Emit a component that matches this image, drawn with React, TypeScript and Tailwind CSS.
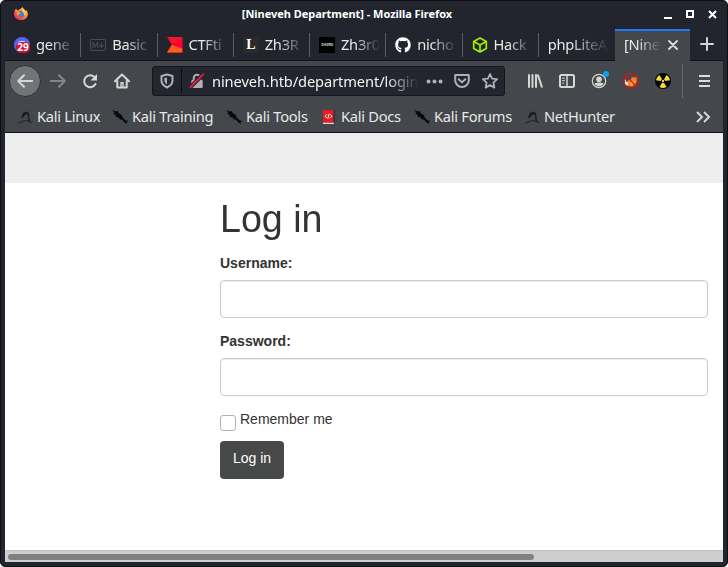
import React from "react";
import { FaGithub } from "react-icons/fa";
import { BsMarkdown } from "react-icons/bs";

const fade = "overflow-hidden whitespace-nowrap pb-[2px] [mask-image:linear-gradient(to_right,black_35%,transparent)]";

function FirefoxLogo() {
  return (
    <svg width="14" height="14" viewBox="0 0 14 14">
      <defs>
        <linearGradient id="fx" x1="1" y1="0" x2="0.2" y2="1">
          <stop offset="0" stopColor="#ffe04a" />
          <stop offset="0.45" stopColor="#ff9a26" />
          <stop offset="1" stopColor="#ed1d57" />
        </linearGradient>
      </defs>
      <path d="M1 3 2 1.6 3 3 4.5 3.3 7.5 1 8.5 0C9 2 11 2.2 11.6 4L12.5 3C13.4 4.6 14 6 13.8 8A6.9 6.2 0 0 1 .2 8C0 6 .4 4.4 1 3Z" fill="url(#fx)" />
      <circle cx="7.2" cy="7" r="3.3" fill="#4579e5" />
      <path d="M2.6 4.6 6 5.2 7 6.5 5 7.2 4.6 8.5 3 8Z" fill="#ff9526" />
      <path d="M8.6 1.2C12 3 12 7 10.2 9 11 6.5 9 5.5 8 4Z" fill="#ffd23f" />
    </svg>
  );
}

function DiscordIcon() {
  return (
    <div className="relative size-4 rounded-full bg-[#5865f2]">
      <div className="absolute left-[4px] top-[4px] h-[6px] w-[8px] rounded-[3px] bg-[#dfe2ff]" />
      <div className="absolute left-[2px] top-[5px] flex h-[11px] w-[14px] items-center justify-center rounded-[5px] bg-[#d3102c] font-['Noto_Sans'] text-[10px] font-bold leading-none tracking-normal text-white">29</div>
    </div>
  );
}

function CtfIcon() {
  return (
    <svg width="16" height="16" viewBox="0 0 16 16">
      <path d="M0 0h15.3v15.5H0l5-7.7Z" fill="#f5142b" />
      <path d="M5 7.8 15.3 11.5v4H0Z" fill="#ff5a1f" />
      <path d="m5 7.8 10.3-7v10.7Z" fill="#ff0035" />
    </svg>
  );
}

function BoxIcon() {
  return (
    <svg width="16" height="16" viewBox="0 0 16 16" fill="none" stroke="#9fef00" strokeWidth="1.7" strokeLinejoin="round">
      <path d="m8 1 6.3 3.5v7L8 15l-6.3-3.5v-7ZM1.7 4.5 8 8l6.3-3.5M8 8v7" />
    </svg>
  );
}

const tabs: { label: string; icon?: React.ReactNode }[] = [
  { label: "gene", icon: <DiscordIcon /> },
  { label: "Basic", icon: <BsMarkdown size={16} color="#4b4b4d" /> },
  { label: "CTFti", icon: <CtfIcon /> },
  { label: "Zh3R", icon: <div className="flex size-4 items-center justify-center bg-[#2a2a2a] font-['Liberation_Serif'] text-[14px] font-bold leading-none text-white">L</div> },
  { label: "Zh3r0", icon: <div className="flex size-4 items-center justify-center bg-black font-['Liberation_Sans'] text-[4px] font-bold leading-none tracking-[-0.1px] text-[#ddd]">ZH3R0</div> },
  { label: "nicho", icon: <FaGithub size={16} color="#fff" /> },
  { label: "Hack", icon: <BoxIcon /> },
  { label: "phpLiteA" },
];

function KaliIcon() {
  return (
    <svg width="16" height="16" viewBox="0 0 16 16">
      <path d="M4.2 9.2C4.6 5 7 2.2 9.8 2.8c2.6.6 2.8 3.4 2.7 6.2l.3 2.2 2.4 2.6-4-1.7c.3-3.2.2-6.6-1.6-6.8-2-.1-2 3.6-5.4 3.9Z" fill="#1b1c1f" />
      <path d="M1 14.2C4 13.8 4.6 12 7.5 11.6s5 1 7.6 2.2" fill="none" stroke="#2a2c30" strokeWidth="1.2" />
    </svg>
  );
}

function DragonIcon() {
  return (
    <svg width="16" height="16" viewBox="0 0 16 16" fill="#08090a">
      <path d="m0 .8 3.6 1.6L5.5 2l2 3 2.2.8L11 9l2.2 2.1 2.8.9-.2 1-1.6-.2 1.3 2.4-3.1-1.6-2.2-2.8-2.7-.5L6.7 8.4 4 8.1 3.4 5.8.9 4.2l1.5-.4Z" />
    </svg>
  );
}

function DocsIcon() {
  return (
    <svg className="ml-px" width="14" height="16" viewBox="0 0 14 16">
      <path d="M1 1h11v13H1Z" fill="#e51c23" />
      <path d="M11.5 1H13v13h-1.5Z" fill="#24314c" />
      <path d="M1 13.8h11V15H1Z" fill="#d9dadb" />
      <path d="m5 5.2-2 2 2 2M8 5.2l2 2-2 2M7.2 4.8 5.8 9.6" fill="none" stroke="#fff" strokeWidth="1" />
    </svg>
  );
}

function Bookmark({ label, icon, className }: { label: string; icon: React.ReactNode; className: string }) {
  return (
    <div className={`flex shrink-0 items-center ${className}`}>
      <div className="mr-1 w-4 shrink-0">{icon}</div>
      <span className="whitespace-nowrap pb-[2px]">{label}</span>
    </div>
  );
}

function Stroke({ children, size = 16, color = "#d6d6d4", width = 2 }: { children: React.ReactNode; size?: number; color?: string; width?: number }) {
  return (
    <svg className="shrink-0" width={size} height={size} viewBox="0 0 16 16" fill="none" stroke={color} strokeWidth={width} strokeLinecap="round" strokeLinejoin="round">
      {children}
    </svg>
  );
}

function ProxyIcon() {
  return (
    <svg width="16" height="16" viewBox="0 0 16 16">
      <circle cx="8" cy="8" r="7.3" fill="#44474b" />
      <path d="M3 10.5 5 7.5l3-1 1-3 1.5 1.2L13.5 4l.3 4-1.5 4-3.5 1.5-4-.5Z" fill="#ef8923" />
      <path d="m1.5 5 2 4 2 1-1 3L2 11Z" fill="#eee5d5" />
      <path d="m8 8 2 1 2-1.5-1 3.5-3 1Z" fill="#ffc067" />
      <circle cx="8" cy="8" r="7.3" fill="none" stroke="#ce151b" strokeWidth="1.3" />
      <path d="m3 3 10 10" stroke="#ce151b" strokeWidth="1.3" />
    </svg>
  );
}

function RadiationIcon() {
  return (
    <svg width="16" height="16" viewBox="0 0 16 16">
      <circle cx="8" cy="8" r="8" fill="#050505" />
      <g fill="#f6d93b">
        <path d="M.9 7.2A7.1 7.1 0 0 1 4.4 1.9L7 6.2A2 2 0 0 0 6 8Z" />
        <path d="M15.1 7.2a7.1 7.1 0 0 0-3.5-5.3L9 6.2A2 2 0 0 1 10 8Z" />
        <path d="M4.5 14.1a7.1 7.1 0 0 0 7 0L9 9.8a2 2 0 0 1-2 0Z" />
        <circle cx="8" cy="8" r="1.2" />
      </g>
    </svg>
  );
}

export default function App() {
  return (
    <div className="h-[567px] w-[728px] bg-white">
      <div className="flex h-full w-full flex-col overflow-hidden rounded-[5px] border border-[#0d0f15] bg-[#23252e] px-1 pb-1 font-['Noto_Sans',sans-serif] text-[#e9e9e7]">
        {/* Title bar */}
        <header className="grid h-7 shrink-0 grid-cols-[230px_1fr_230px] items-center">
          <div className="-mt-[2px] pl-[9px]"><FirefoxLogo /></div>
          <h1 className="-mt-[3px] ml-[-34px] whitespace-nowrap text-center text-[11px] font-bold leading-4 tracking-[-0.04px] text-white">[Nineveh Department] - Mozilla Firefox</h1>
          <div className="-mt-[2px] flex items-center justify-end gap-[13px] pr-[6px]">
            <svg width="9" height="9" viewBox="0 0 9 9"><path d="M0 7h8v2H0Z" fill="#fff" /></svg>
            <svg width="9" height="9" viewBox="0 0 9 9"><path d="M1 1h6v6H1Z" fill="none" stroke="#fff" strokeWidth="2" /></svg>
            <svg width="9" height="9" viewBox="0 0 9 9"><path d="m1 1 7 7m0-7-7 7" stroke="#fff" strokeWidth="2" /></svg>
          </div>
        </header>

        {/* Tabs */}
        <div className="flex h-8 shrink-0 border-b border-[#101117] text-[14.67px] tracking-[-0.27px]">
          {tabs.map((tab, i) => (
            <div key={i} className="flex w-[76.25px] shrink-0 items-center pl-[9px]">
              {tab.icon && <div className="mr-[6px] w-4 shrink-0">{tab.icon}</div>}
              <div className={`min-w-0 flex-1 ${fade}`}>{tab.label}</div>
              <div className={`ml-[5px] h-6 w-px ${i === 7 ? "bg-transparent" : "bg-[#5b5d63]"}`} />
            </div>
          ))}
          <div className="-mb-px flex h-8 w-[75px] shrink-0 items-center border-t-2 border-[#2277f5] bg-[#44474c] pl-[9px]">
            <div className={`-mt-[2px] w-[38px] ${fade}`}>[Ninev</div>
            <svg className="-mt-[2px] ml-[6px]" width="10" height="10" viewBox="0 0 10 10"><path d="m1 1 8 8m0-8L1 9" stroke="#deddda" strokeWidth="1.8" strokeLinecap="round" /></svg>
          </div>
          <div className="flex flex-1 items-center justify-center pb-px">
            <svg width="14" height="14" viewBox="0 0 14 14"><path d="M7 1v12M1 7h12" stroke="#d5d3d2" strokeWidth="2" strokeLinecap="round" /></svg>
          </div>
        </div>

        {/* Navigation */}
        <nav className="flex h-10 shrink-0 items-center bg-[#44474c]">
          <div className="ml-1 flex size-8 shrink-0 items-center justify-center rounded-full border border-[#303237] bg-[#737477]">
            <Stroke><path d="M15.2 8H1.2M7 2.2 1.2 8 7 13.8" /></Stroke>
          </div>
          <div className="ml-[9px] w-4"><Stroke color="#85868a"><path d="M.8 8h14M9 2.2 14.8 8 9 13.8" /></Stroke></div>
          <div className="ml-4 w-4">
            <svg width="16" height="16" viewBox="0 0 16 16"><path d="M13.5 11A6 6 0 1 1 12.5 4" fill="none" stroke="#d6d6d4" strokeWidth="2" strokeLinecap="round" /><path d="M15 1v6.5H8.5Z" fill="#d6d6d4" /></svg>
          </div>
          <div className="ml-4 w-4">
            <Stroke><path d="M1 8.3 8 1.5l7 6.8M3.3 8v6.5h9.4V8" /><path d="M7 14V9.7h2V14" strokeWidth="1.4" /></Stroke>
          </div>
          <div className="ml-[22px] flex h-[30px] w-[353px] shrink-0 items-center rounded-[3px] border border-[#15161d] bg-[#23252f]">
            <div className="ml-[7px] w-4">
              <svg width="14" height="16" viewBox="0 0 14 16"><path d="M7 1.5 12.5 3v4.5c0 3-2 5.4-5.5 7-3.5-1.6-5.5-4-5.5-7V3Z" fill="none" stroke="#aeb0b5" strokeWidth="2" strokeLinejoin="round" /><path d="M7 4.4v7.1C5.2 10.3 4.4 9 4.4 7.3V5Z" fill="#aeb0b5" /></svg>
            </div>
            <div className="ml-[5px] h-6 w-px bg-[#0d0e13]" />
            <div className="ml-[7px] w-4">
              <svg width="16" height="16" viewBox="0 0 16 16"><path d="M4.7 8V5a3.3 3.3 0 0 1 6.6 0v3" fill="none" stroke="#aeb0b5" strokeWidth="2" /><rect x="2.3" y="7" width="11.4" height="8" rx="1" fill="#aeb0b5" /><path d="m1 14.5 13-13" stroke="#23252f" strokeWidth="4" /><path d="m1.5 14 12.7-12.6" stroke="#e81b48" strokeWidth="2" strokeLinecap="round" /></svg>
            </div>
            <div className="ml-[7px] w-[207px] overflow-hidden whitespace-nowrap text-[14.67px] tracking-[-0.11px] text-[#f4f4f2] [mask-image:linear-gradient(to_right,black_84%,transparent)]">nineveh.htb/department/login</div>
            <svg className="ml-[7px] shrink-0" width="17" height="5" viewBox="0 0 17 5" fill="#b0b1b4"><circle cx="2.5" cy="2.5" r="2" /><circle cx="8.5" cy="2.5" r="2" /><circle cx="14.5" cy="2.5" r="2" /></svg>
            <div className="ml-[11px]"><Stroke color="#aeb0b5"><path d="M1.2 2h13.6v5.2a6.8 6.8 0 0 1-13.6 0ZM4.7 6.2 8 9.4l3.3-3.2" /></Stroke></div>
            <div className="ml-3"><Stroke color="#aeb0b5" width={1.8}><path d="m8 1 2.1 4.6 5 .6-3.7 3.4 1 5L8 12.1l-4.4 2.5 1-5L.9 6.2l5-.6Z" /></Stroke></div>
          </div>
          <div className="ml-[22px]">
            <svg width="16" height="16" viewBox="0 0 16 16"><path d="M2 2v12M5.5 2v12M9 2v12M11 2.4l3.8 11.4" stroke="#d6d6d4" strokeWidth="2" strokeLinecap="round" /></svg>
          </div>
          <div className="ml-4"><Stroke><rect x="1" y="2" width="14" height="12" rx="1.5" /><path d="M8 2v12" strokeWidth="1.5" /><path d="M3.5 5.2h2M3.5 7.7h2M3.5 10.2h1" strokeWidth="1" /></Stroke></div>
          <div className="relative ml-4 size-4">
            <svg width="16" height="16" viewBox="0 0 16 16"><circle cx="8" cy="8" r="6.7" fill="none" stroke="#d6d6d4" strokeWidth="1.2" /><circle cx="8" cy="6.2" r="2.8" fill="#d6d6d4" /><path d="M3.3 10.5c2.7-1.5 6.7-1.5 9.4 0C11.7 12.4 10 13.3 8 13.3s-3.7-.9-4.7-2.8Z" fill="#d6d6d4" /></svg>
            <div className="absolute left-[12px] top-[-2px] size-[6px] rounded-full bg-[#00a5f5]" />
          </div>
          <div className="ml-4"><ProxyIcon /></div>
          <div className="ml-4"><RadiationIcon /></div>
          <div className="ml-[11px] h-[34px] w-px bg-[#66686d]" />
          <svg className="ml-[15px]" width="13" height="14" viewBox="0 0 13 14"><path d="M1 2h11M1 7h11M1 12h11" stroke="#deddda" strokeWidth="2" /></svg>
        </nav>

        {/* Bookmarks */}
        <div className="flex h-8 shrink-0 items-center border-b border-[#101117] bg-[#44474c] pl-3 text-[14.67px] tracking-[-0.27px]">
          <Bookmark className="w-[95px]" label="Kali Linux" icon={<KaliIcon />} />
          <Bookmark className="w-[114px]" label="Kali Training" icon={<DragonIcon />} />
          <Bookmark className="w-[95px]" label="Kali Tools" icon={<DragonIcon />} />
          <Bookmark className="w-[93px]" label="Kali Docs" icon={<DocsIcon />} />
          <Bookmark className="w-[110px]" label="Kali Forums" icon={<DragonIcon />} />
          <Bookmark className="w-[110px]" label="NetHunter" icon={<KaliIcon />} />
          <svg className="ml-auto mr-[13px]" width="14" height="12" viewBox="0 0 14 12"><path d="m1 1 5 5-5 5M8 1l5 5-5 5" fill="none" stroke="#d6d6d4" strokeWidth="2" /></svg>
        </div>

        {/* Web page */}
        <main className="flex min-h-0 flex-1 flex-col bg-white font-['Liberation_Sans',sans-serif] text-sm text-[#333]">
          <div className="h-[50px] shrink-0 bg-[#eee]" />
          <form className="ml-[215px] flex w-[488px] flex-1 flex-col items-start">
            <h2 className="mt-[14px] h-[44px] origin-left scale-x-[.965] text-[39px] leading-[43px]">Log in</h2>
            <label className="mt-3 h-5 font-bold leading-5" htmlFor="username">Username:</label>
            <input id="username" className="mt-[7px] h-[38px] w-full rounded-[4px] border border-[#ccc] bg-white shadow-[inset_0_1px_1px_rgba(0,0,0,0.075)]" />
            <label className="mt-[13px] h-5 font-bold leading-5" htmlFor="password">Password:</label>
            <input id="password" type="password" className="mt-[7px] h-[38px] w-full rounded-[4px] border border-[#ccc] bg-white shadow-[inset_0_1px_1px_rgba(0,0,0,0.075)]" />
            <label className="mt-[13px] flex h-[22px] items-start leading-5">
              <input type="checkbox" className="mr-1 mt-[6px] size-4 shrink-0 appearance-none rounded-[3px] border border-[#b8aea9] bg-white" />
              Remember me
            </label>
            <button type="button" className="mt-[10px] h-[38px] w-16 rounded-[4px] bg-[#474949] pb-[5px] leading-5 text-white">Log in</button>
          </form>
          <div className="flex h-3 shrink-0 items-center border-t border-[#c5c1b9] bg-[#cecece] pl-[3px]">
            <div className="h-[6px] w-[526px] rounded-full bg-[#7e8180]" />
          </div>
        </main>
      </div>
    </div>
  );
}
